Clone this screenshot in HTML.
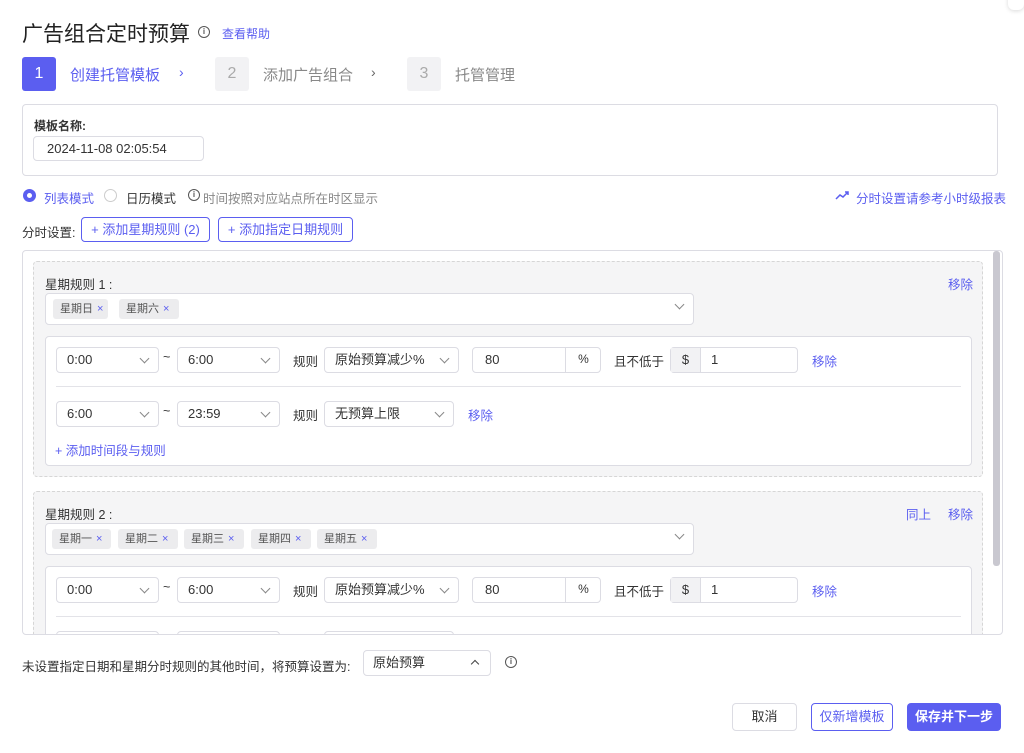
<!DOCTYPE html>
<html><head><meta charset="utf-8"><style>
*{box-sizing:border-box;margin:0;padding:0}
body{width:1024px;height:753px;background:#fff;font-family:"Liberation Sans","Noto Sans CJK SC",sans-serif;color:#333;font-size:13px;position:relative;overflow:hidden}
.a{position:absolute}
.blue{color:#5b5ef0}
.box{position:absolute;border:1px solid #dcdce3;border-radius:4px;background:#fff}
.sel{position:absolute;border:1px solid #dcdce3;border-radius:4px;background:#fff;height:26px;line-height:24px;padding-left:10px;font-size:13px;color:#333}
.sel::after{content:"";position:absolute;right:10px;top:7px;width:6px;height:6px;border-right:1px solid #888;border-bottom:1px solid #888;transform:rotate(45deg)}
.tag{position:absolute;height:20px;line-height:20px;background:#ececee;border-radius:3px;font-size:11px;color:#555;padding-left:7px}
.tag b{font-weight:normal;color:#5b5ef0;margin-left:4px}
.lbl{position:absolute;font-size:12.5px;color:#333}
.link{position:absolute;font-size:12.5px;color:#5b5ef0}
.step{position:absolute;width:34px;height:34px;border-radius:3px;text-align:center;line-height:34px;font-size:16px}
.info{position:absolute;width:12px;height:12px;border:1.2px solid #555;border-radius:50%;font-size:8px;line-height:10px;text-align:center;color:#555;font-weight:bold}
.btn{position:absolute;border-radius:4px;text-align:center;font-size:13px}
</style></head><body>
<div class="a" style="right:0;top:-8px;width:16px;height:18px;background:#fff;border-radius:6px;box-shadow:0 1px 4px rgba(0,0,0,.15)"></div>

<div class="a" style="left:22px;top:18px;font-size:21px;color:#222">广告组合定时预算</div>
<div class="info" style="left:198px;top:26px">i</div>
<div class="link" style="left:222px;top:25px;font-size:12px">查看帮助</div>

<div class="step" style="left:22px;top:57px;background:#5b5ef0;color:#fff">1</div>
<div class="a blue" style="left:70px;top:64px;font-size:15px">创建托管模板</div>
<div class="a blue" style="left:179px;top:64px;font-size:14px">›</div>
<div class="step" style="left:215px;top:57px;background:#f2f2f4;color:#aaa">2</div>
<div class="a" style="left:263px;top:64px;font-size:15px;color:#888">添加广告组合</div>
<div class="a" style="left:371px;top:64px;font-size:14px;color:#666">›</div>
<div class="step" style="left:407px;top:57px;background:#f2f2f4;color:#aaa">3</div>
<div class="a" style="left:455px;top:64px;font-size:15px;color:#888">托管管理</div>

<div class="box" style="left:22px;top:104px;width:976px;height:72px"></div>
<div class="lbl" style="left:34px;top:117px;font-size:12px;font-weight:bold">模板名称:</div>
<div class="box" style="left:33px;top:136px;width:171px;height:25px;line-height:23px;padding-left:13px;font-size:13px">2024-11-08 02:05:54</div>

<div class="a" style="left:23px;top:189px;width:13px;height:13px;border-radius:50%;border:4px solid #5b5ef0"></div>
<div class="link" style="left:44px;top:188px">列表模式</div>
<div class="a" style="left:104px;top:189px;width:13px;height:13px;border-radius:50%;border:1px solid #ccc"></div>
<div class="lbl" style="left:126px;top:188px">日历模式</div>
<div class="info" style="left:188px;top:189px">i</div>
<div class="lbl" style="left:203px;top:188px;color:#888">时间按照对应站点所在时区显示</div>
<svg class="a" style="left:835px;top:190px" width="14" height="10" viewBox="0 0 14 10"><path d="M1 9 L5 5 L8 7 L13 2 M10 2 H13 V5" fill="none" stroke="#5b5ef0" stroke-width="1.5"/></svg>
<div class="link" style="left:856px;top:188px">分时设置请参考小时级报表</div>

<div class="lbl" style="left:22px;top:222px">分时设置:</div>
<div class="btn blue" style="left:81px;top:217px;width:129px;height:25px;line-height:23px;border:1px solid #5b5ef0">+ 添加星期规则 (2)</div>
<div class="btn blue" style="left:218px;top:217px;width:135px;height:25px;line-height:23px;border:1px solid #5b5ef0">+ 添加指定日期规则</div>

<div class="a" style="left:22px;top:250px;width:981px;height:385px;border:1px solid #dcdce3;border-radius:4px;overflow:hidden">
 <div class="a" style="right:2px;top:0;width:7px;height:315px;background:#c9c8d0;border-radius:3px"></div>
 <!-- rule 1 -->
 <div class="a" style="left:10px;top:10px;width:950px;height:216px;border:1px dashed #d6d6d6;border-radius:4px;background:#f5f5f6"></div>
 <div class="lbl" style="left:22px;top:23px">星期规则 1 :</div>
 <div class="link" style="left:925px;top:23px">移除</div>
 <div class="sel" style="left:22px;top:42px;width:649px;height:32px"></div>
 <div class="tag" style="left:30px;top:48px;width:55px">星期日<b>×</b></div>
 <div class="tag" style="left:96px;top:48px;width:60px">星期六<b>×</b></div>
 <div class="box" style="left:22px;top:85px;width:927px;height:130px"></div>
 <div class="sel" style="left:33px;top:96px;width:103px">0:00</div>
 <div class="lbl" style="left:140px;top:99px">~</div>
 <div class="sel" style="left:154px;top:96px;width:103px">6:00</div>
 <div class="lbl" style="left:270px;top:100px">规则</div>
 <div class="sel" style="left:301px;top:96px;width:135px">原始预算减少%</div>
 <div class="box" style="left:449px;top:96px;width:129px;height:26px;line-height:24px;padding-left:12px">80<span class="a" style="left:92px;top:-1px;width:36px;height:26px;border-left:1px solid #dcdce3;text-align:center;font-size:12px">%</span></div>
 <div class="lbl" style="left:591px;top:100px">且不低于</div>
 <div class="box" style="left:647px;top:96px;width:128px;height:26px;line-height:24px;padding-left:40px">1<span class="a" style="left:0;top:0;width:30px;height:24px;background:#f2f2f4;border-right:1px solid #dcdce3;text-align:center">$</span></div>
 <div class="link" style="left:789px;top:100px">移除</div>
 <div class="a" style="left:33px;top:135px;width:905px;height:1px;background:#e3e3e8"></div>
 <div class="sel" style="left:33px;top:150px;width:103px">6:00</div>
 <div class="lbl" style="left:140px;top:153px">~</div>
 <div class="sel" style="left:154px;top:150px;width:103px">23:59</div>
 <div class="lbl" style="left:270px;top:154px">规则</div>
 <div class="sel" style="left:301px;top:150px;width:130px">无预算上限</div>
 <div class="link" style="left:445px;top:154px">移除</div>
 <div class="link" style="left:32px;top:189px">+ 添加时间段与规则</div>
 <!-- rule 2 -->
 <div class="a" style="left:10px;top:240px;width:950px;height:200px;border:1px dashed #d6d6d6;border-radius:4px;background:#f5f5f6"></div>
 <div class="lbl" style="left:22px;top:253px">星期规则 2 :</div>
 <div class="link" style="left:883px;top:253px">同上</div>
 <div class="link" style="left:925px;top:253px">移除</div>
 <div class="sel" style="left:22px;top:272px;width:649px;height:32px"></div>
 <div class="tag" style="left:29px;top:278px;width:59px">星期一<b>×</b></div>
 <div class="tag" style="left:95px;top:278px;width:60px">星期二<b>×</b></div>
 <div class="tag" style="left:161px;top:278px;width:60px">星期三<b>×</b></div>
 <div class="tag" style="left:228px;top:278px;width:60px">星期四<b>×</b></div>
 <div class="tag" style="left:294px;top:278px;width:60px">星期五<b>×</b></div>
 <div class="box" style="left:22px;top:315px;width:927px;height:130px"></div>
 <div class="sel" style="left:33px;top:326px;width:103px">0:00</div>
 <div class="lbl" style="left:140px;top:329px">~</div>
 <div class="sel" style="left:154px;top:326px;width:103px">6:00</div>
 <div class="lbl" style="left:270px;top:330px">规则</div>
 <div class="sel" style="left:301px;top:326px;width:135px">原始预算减少%</div>
 <div class="box" style="left:449px;top:326px;width:129px;height:26px;line-height:24px;padding-left:12px">80<span class="a" style="left:92px;top:-1px;width:36px;height:26px;border-left:1px solid #dcdce3;text-align:center;font-size:12px">%</span></div>
 <div class="lbl" style="left:591px;top:330px">且不低于</div>
 <div class="box" style="left:647px;top:326px;width:128px;height:26px;line-height:24px;padding-left:40px">1<span class="a" style="left:0;top:0;width:30px;height:24px;background:#f2f2f4;border-right:1px solid #dcdce3;text-align:center">$</span></div>
 <div class="link" style="left:789px;top:330px">移除</div>
 <div class="a" style="left:33px;top:365px;width:905px;height:1px;background:#e3e3e8"></div>
 <div class="sel" style="left:33px;top:380px;width:103px"></div>
 <div class="sel" style="left:154px;top:380px;width:103px"></div>
 <div class="sel" style="left:301px;top:380px;width:130px"></div>
</div>

<div class="lbl" style="left:22px;top:656px">未设置指定日期和星期分时规则的其他时间，将预算设置为:</div>
<div class="box" style="left:363px;top:650px;width:128px;height:26px;line-height:24px;padding-left:9px">原始预算<span class="a" style="right:12px;top:10px;width:6px;height:6px;border-left:1.3px solid #444;border-top:1.3px solid #444;transform:rotate(45deg)"></span></div>
<div class="info" style="left:505px;top:656px">i</div>

<div class="btn" style="left:732px;top:703px;width:65px;height:28px;line-height:26px;border:1px solid #dcdce3">取消</div>
<div class="btn blue" style="left:811px;top:703px;width:82px;height:28px;line-height:26px;border:1px solid #5b5ef0">仅新增模板</div>
<div class="btn" style="left:907px;top:703px;width:94px;height:28px;line-height:28px;background:#5b5ef0;color:#fff;font-weight:bold">保存并下一步</div>
</body></html>
